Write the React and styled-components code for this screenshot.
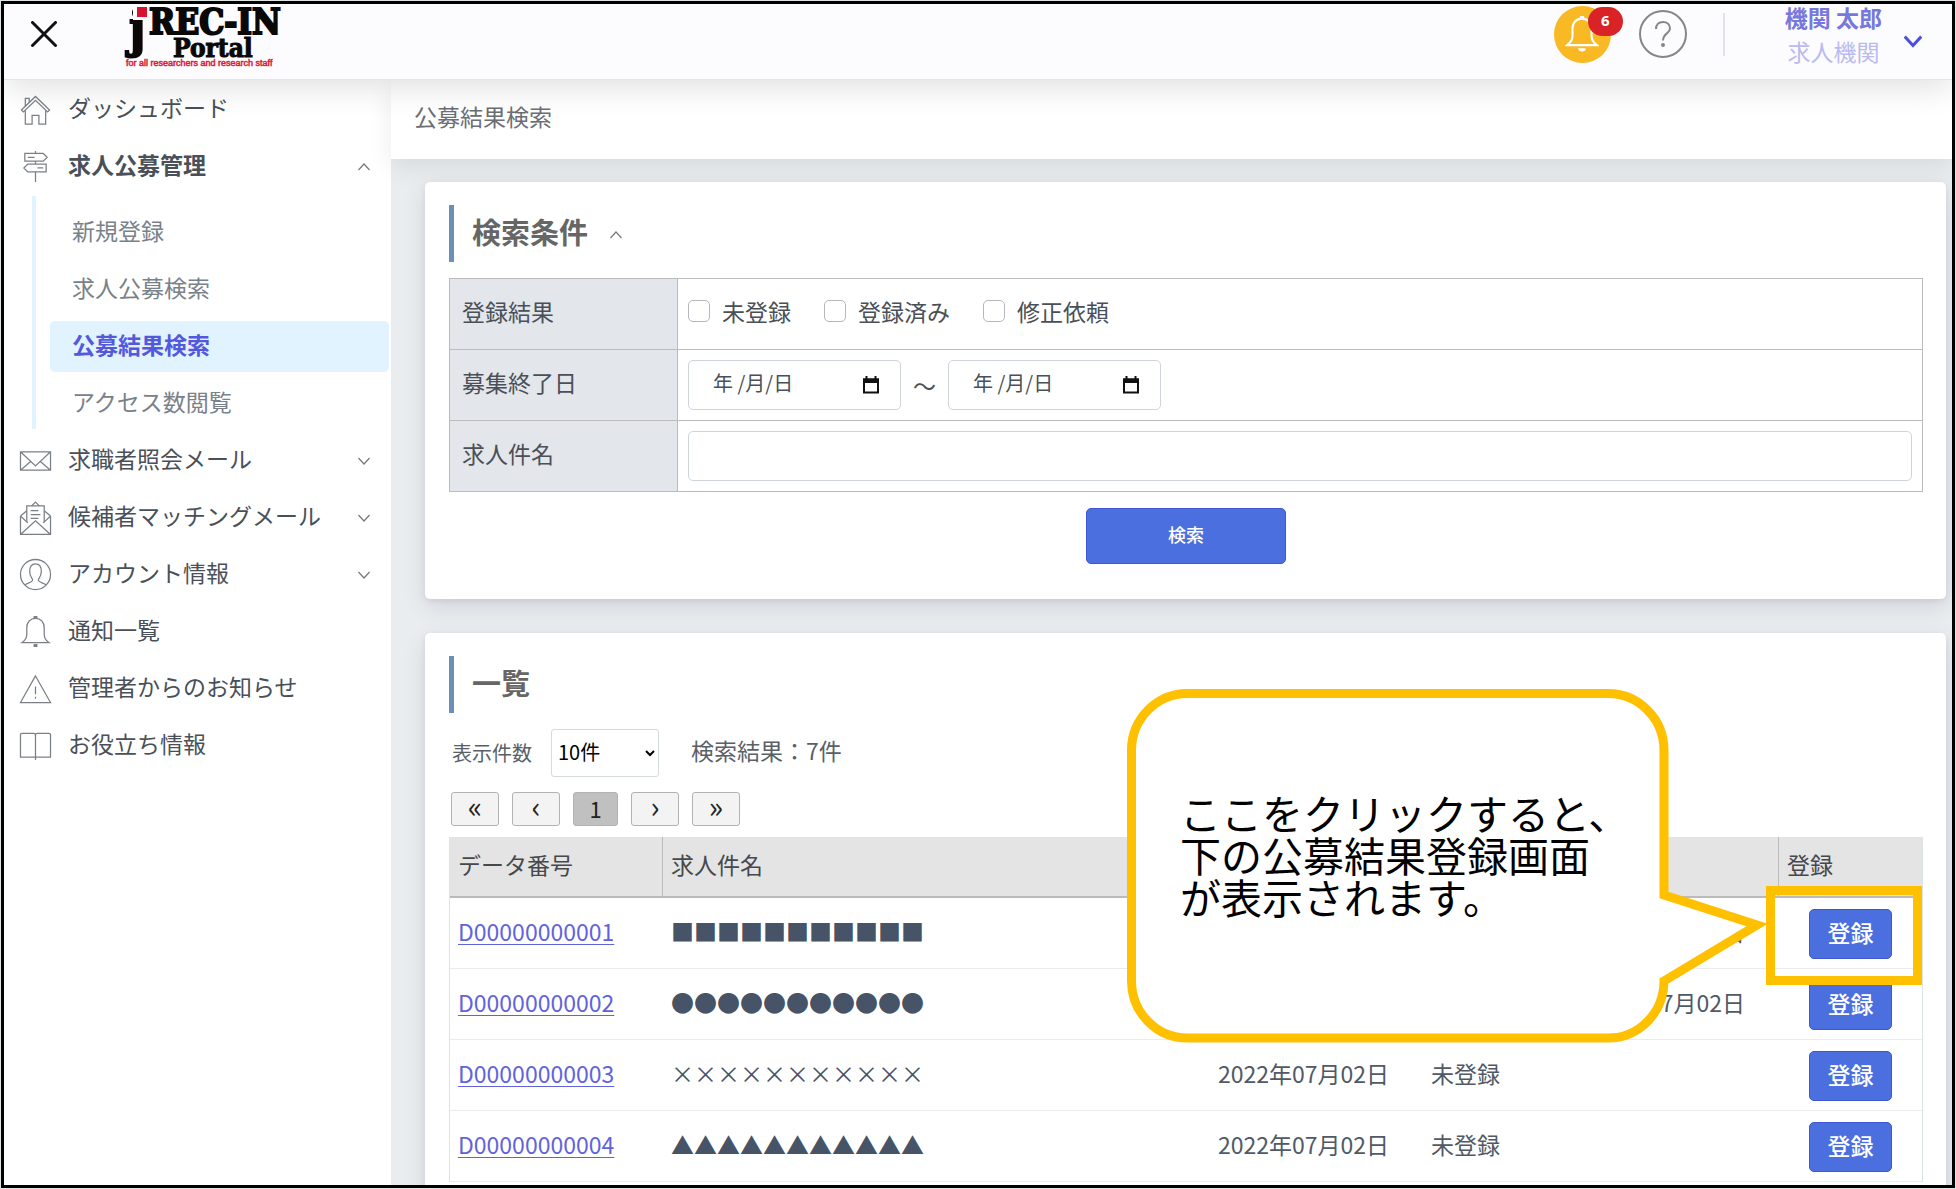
import React from "react";
import styled, { createGlobalStyle } from "styled-components";

const Global = createGlobalStyle`
  *, *::before, *::after { box-sizing: border-box; }
  body { margin: 0; background: #dfe5e2; }
  body, button, input, select {
    font-family: "Noto Sans CJK JP", "Noto Sans", sans-serif;
  }
  button { cursor: pointer; padding: 0; }
`;

const INK = "#4a5058";
const BLUE = "#4c6fdf";
const AMBER = "#ffc000";

/* ---------- page shell ---------- */

const Frame = styled.div`
  height: 100vh;
  padding: 1px;
  overflow: hidden;
`;

const Shell = styled.div`
  height: 100%;
  display: flex;
  flex-direction: column;
  border: 3px solid #000;
  background: #e9edf0;
  overflow: hidden;
`;

const Header = styled.header`
  position: relative;
  z-index: 2;
  flex: none;
  height: 76px;
  padding: 0 30px 15px 27px;
  display: flex;
  align-items: center;
  background: #fcfcff;
  border-bottom: 1px solid #e4e5e8;
  box-shadow: 0 8px 32px rgba(0, 0, 0, 0.12);
`;

const IconButton = styled.button`
  display: flex;
  border: 0;
  background: none;
  color: #111;
`;

const LogoLink = styled.a`
  display: flex;
  margin-left: 68px;
  margin-right: auto;
`;

const HeaderTools = styled.div`
  display: flex;
  align-items: center;
  gap: 28px;
`;

const BellButton = styled.button`
  position: relative;
  width: 57px;
  height: 57px;
  display: flex;
  align-items: center;
  justify-content: center;
  border: 0;
  border-radius: 50%;
  background: #f8b924;
`;

const Badge = styled.span`
  position: absolute;
  top: 1px;
  right: -12px;
  width: 35px;
  height: 29px;
  border-radius: 15px;
  background: #d92326;
  color: #fff;
  font: 700 15px/27px "Noto Sans", sans-serif;
  text-align: center;
`;

const HelpButton = styled.button`
  display: flex;
  border: 0;
  background: none;
`;

const UserBox = styled.div`
  display: flex;
  align-items: center;
  gap: 60px;
  margin-left: 8px;
`;

const Divider = styled.span`
  width: 2px;
  height: 43px;
  background: #e1e3e8;
`;

const User = styled.div`
  display: flex;
  align-items: center;
  gap: 22px;
  ${IconButton} { padding-top: 14px; }
`;

const UserText = styled.div`
  display: flex;
  flex-direction: column;
  align-items: center;
  font-size: 23px;
  line-height: 34px;
  color: #b9baf0;
  strong { color: #7678dd; font-weight: 700; }
`;

const Body = styled.div`
  flex: 1;
  min-height: 0;
  display: flex;
`;

/* ---------- side menu ---------- */

const Side = styled.nav`
  flex: none;
  width: 387px;
  background: #fff;
`;

const MenuRow = styled.a`
  display: flex;
  align-items: center;
  height: 57px;
  padding: 0 21px 0 16px;
  color: ${INK};
  font-size: 23px;
  font-weight: ${(p) => (p.$open ? 700 : 400)};
  text-decoration: none;
  span { flex: 1; padding: 0 0 3px 17px; }
  > svg { margin-top: 3px; }
`;

const MenuIcon = styled.svg`
  flex: none;
  width: 31px;
  height: 32px;
  fill: none;
  stroke: #7b8087;
  stroke-width: 1.3;
  overflow: visible;
`;

const SubMenu = styled.div`
  margin: 2px 2px 2px 28px;
  padding: 11px 0 0 14px;
  border-left: 4px solid #e0f3ff;
`;

const SubRow = styled.a`
  display: flex;
  align-items: center;
  height: 51px;
  margin-bottom: 6px;
  padding: 0 0 6px 22px;
  border-radius: 5px;
  font-size: 23px;
  text-decoration: none;
  color: ${(p) => (p.$active ? "#5458dc" : "#79828a")};
  font-weight: ${(p) => (p.$active ? 700 : 400)};
  background: ${(p) => (p.$active ? "#e0f3ff" : "transparent")};
  &:last-child { margin-bottom: 0; }
`;

/* ---------- main ---------- */

const Main = styled.main`
  flex: 1;
  min-width: 0;
  display: flex;
  flex-direction: column;
`;

const Crumb = styled.div`
  flex: none;
  height: 79px;
  padding: 0 24px 8px 23px;
  display: flex;
  align-items: center;
  background: #fff;
  color: #6b6e73;
  font-size: 23px;
  box-shadow: 0 8px 24px rgba(0, 0, 0, 0.08);
`;

const Cards = styled.div`
  flex: 1;
  display: flex;
  flex-direction: column;
  gap: 34px;
  padding: 23px 6px 0 34px;
`;

const Card = styled.section`
  flex: ${(p) => (p.$fill ? "1 0 auto" : "none")};
  padding: 23px 23px 35px 24px;
  border-radius: 5px;
  background: #fff;
  box-shadow: 0 8px 24px rgba(8, 10, 37, 0.1), 0 2px 6px rgba(8, 10, 37, 0.08);
`;

const Title = styled.h2`
  display: flex;
  align-items: center;
  gap: 22px;
  height: 57px;
  margin: 0 0 16px;
  padding: 0 0 6px 18px;
  border-left: 5px solid #6c8fb5;
  color: #666;
  font-size: 29px;
  font-weight: 700;
  svg { margin-top: 8px; }
`;

const FormTable = styled.table`
  width: 100%;
  border-collapse: collapse;
  table-layout: fixed;
  color: ${INK};
  font-size: 23px;
  th, td { height: 71px; border: 1px solid #bbb; }
  th {
    width: 228px;
    padding: 0 12px 7px;
    background: #e3e6eb;
    font-weight: 400;
    text-align: left;
  }
  td { padding: 0 10px; }
`;

const Line = styled.div`
  display: flex;
  align-items: center;
  gap: ${(p) => p.$gap}px;
`;

const Check = styled.label`
  display: flex;
  align-items: center;
  gap: 12px;
  padding-bottom: 6px;
  input {
    appearance: none;
    width: 22px;
    height: 22px;
    margin: 0;
    border: 1px solid #b4b7bb;
    border-radius: 5px;
    background: #fff;
  }
`;

const Field = styled.div`
  display: flex;
  align-items: center;
  flex: ${(p) => (p.$wide ? "1" : "none")};
  width: 213px;
  height: 50px;
  padding: 0 20px 0 24px;
  border: 1px solid #ced4da;
  border-radius: 5px;
  background: #fff;
  input {
    flex: 1;
    min-width: 0;
    padding: 0 0 6px;
    border: 0;
    outline: 0;
    background: none;
    color: ${INK};
    font-size: 20px;
  }
  input::placeholder { color: ${INK}; opacity: 1; }
`;

const Blue = styled.button`
  width: ${(p) => p.$w}px;
  height: ${(p) => p.$h}px;
  display: block;
  margin: ${(p) => p.$top || 0}px auto 0;
  padding-bottom: 4px;
  border: 1px solid #3f57d2;
  border-radius: 5px;
  background: ${BLUE};
  color: #fff;
  font-size: ${(p) => p.$size}px;
  font-weight: 500;
`;

const CountRow = styled.div`
  display: flex;
  align-items: center;
  height: 48px;
  padding-left: 3px;
  color: #5a6068;
  font-size: 23px;
  label { padding-bottom: 2px; font-size: 20px; }
  span { padding-bottom: 6px; }
  select {
    width: 108px;
    height: 48px;
    margin: 0 32px 0 19px;
    padding: 0 2px 4px;
    border: 1px solid #d5dadd;
    border-radius: 3px;
    background: #fff;
    color: #000;
    font-size: 20px;
  }
`;

const Pager = styled.div`
  display: flex;
  gap: 13px;
  margin: 15px 0 11px 2px;
`;

const PageButton = styled.button`
  width: ${(p) => (p.$on ? 45 : 48)}px;
  height: 34px;
  display: flex;
  align-items: center;
  justify-content: center;
  padding-bottom: ${(p) => (p.$on ? 3 : 8)}px;
  border: 1px solid #b2b2b2;
  border-radius: 3px;
  background: ${(p) => (p.$on ? "#c0c0c0" : "#f3f3f3")};
  color: #222;
  font-size: ${(p) => (p.$on ? 22 : 30)}px;
  line-height: 30px;
`;

const ListTable = styled.table`
  width: 100%;
  border-collapse: separate;
  border-spacing: 0;
  table-layout: fixed;
  border: solid #dde2e4;
  border-width: 0 1px;
  color: #505a66;
  font-size: 23px;
  th {
    height: 61px;
    padding: 0 8px 5px;
    border-bottom: 2px solid #bbb;
    background: #e4e4e4;
    color: #45484d;
    font-weight: 400;
    text-align: left;
  }
  th.ruled { border-right: 1px solid #bbb; }
  td {
    height: 71px;
    padding: 0 8px 4px;
    border-bottom: 1px solid #e9ecef;
    white-space: nowrap;
  }
  td:last-child { padding: 2px 8px 0; }
  a { color: #6163dd; text-underline-offset: 3px; text-decoration-thickness: 1px; }
`;

const Shapes = styled.span`
  color: #475366;
`;

const ActionCell = styled.td`
  position: relative;
`;

const Highlight = styled.div`
  position: absolute;
  inset: -12px 0 -17px -13px;
  z-index: 1;
  border: 9px solid ${AMBER};
  pointer-events: none;
`;

const Callout = styled.div`
  position: absolute;
  z-index: 1;
  top: -209px;
  right: calc(100% + 12px);
  width: 640px;
  height: 354px;
  svg { position: absolute; inset: 0; }
  p {
    position: relative;
    margin: 0;
    padding: 102px 0 0 53px;
    color: #000;
    font-size: 41px;
    line-height: 42px;
    white-space: nowrap;
  }
`;

/* ---------- drawings ---------- */

const Chevron = ({ w = 12, up, width = 1.2, color = "#777" }) => (
  <svg width={w} height={w} viewBox="0 0 12 12" fill="none" stroke={color} strokeWidth={width}>
    <path d={up ? "M0.5 9 6 3 11.5 9" : "M0.5 3 6 9 11.5 3"} />
  </svg>
);

const Logo = () => (
  <svg width="160" height="64" viewBox="0 0 160 64" overflow="visible" role="img" aria-label="jREC-IN Portal">
    <g
      fontFamily='"DejaVu Serif Condensed", "DejaVu Serif", serif'
      fontWeight="700"
      fill="#0b0808"
      stroke="#0b0808"
    >
      <text x="4" y="44" fontSize="50" strokeWidth="2">j</text>
      <text x="24" y="32" fontSize="35" strokeWidth="2">REC-IN</text>
      <text x="48" y="55" fontSize="26" strokeWidth="1">Portal</text>
    </g>
    <rect x="8" y="2" width="15" height="16" fill="#fcfcff" />
    <rect x="12" y="5" width="10" height="10" fill="#d7112f" />
    <text x="1" y="64" fontSize="9" fontFamily='"Liberation Sans", sans-serif' fill="#e0193a" stroke="#e0193a" strokeWidth="0.5">
      for all researchers and research staff
    </text>
  </svg>
);

const BellShape = "M16 2.5c-5.5 0-9 4-9 9.500v7c0 4-1.500 6-5 8.500h28c-3.500-2.500-5-4.500-5-8.500v-7c0-5.500-3.500-9.500-9-9.500z";

const icons = {
  home: (
    <>
      <path d="M1.500 16.500 16 2.500 30.500 16.500 28.500 18.500 16 6.500 3.500 18.500z" />
      <path d="M5.500 17v14h7v-9h7v9h7V17M5.500 12.500v-8h4v4" />
    </>
  ),
  signs: (
    <>
      <path d="M5 2.500h19l4 4-4 4H5zM27 13.500H8l-4 4 4 4h19zM8 6.500h7M18 17.500h6" />
      <path d="M16 0v2.500M16 10.500v3M16 21.500V32" />
    </>
  ),
  mail: <path d="M.5 7h31v19H.5zM.5 7 16 21.500 31.500 7M.5 26 11 17M31.500 26 21 17" />,
  openMail: (
    <>
      <path d="M.5 14.500v19h31v-19M.5 33.500 16 19.500l15.500 14M.5 14.500 7 9M.5 14.500l7.500 7M31.500 14.500 25 9M31.500 14.500l-7.500 7" />
      <path d="M7 21V4h18v17M12 4l4-4 4 4M11 9h8M11 13h10M11 17h8" />
    </>
  ),
  person: (
    <>
      <circle cx="16" cy="16" r="15.500" />
      <path d="M5 27c2-3 7-2 8-5 .6-2-3-3-3-9 0-5 2-8 6-8s6 3 6 8c0 6-3.600 7-3 9 1 3 6 2 8 5" />
    </>
  ),
  bell: (
    <>
      <path d={BellShape} />
      <path d="M14 1.500h4M14 30.500h4" strokeWidth="3" />
    </>
  ),
  warn: <path d="M16 3 .5 30.500h31zM16 14v8M16 24.500v2" />,
  book: <path d="M2 3.500h12q2 0 2 2 0-2 2-2h12q1.500 0 1.500 1.500v23H.5V5Q.5 3.500 2 3.500zM16 5v26" />,
};

const Icon = ({ name }) => (
  <MenuIcon viewBox="0 0 32 33" aria-hidden="true">{icons[name]}</MenuIcon>
);

const Calendar = () => (
  <svg width="18" height="20" viewBox="0 0 18 20" aria-hidden="true">
    <path d="M2 4.500h14v13H2z" fill="none" stroke="#111" strokeWidth="2" />
    <path d="M1 3.500h16V8H1zM3.500 1h2v3h-2zM12.500 1h2v3h-2z" fill="#111" />
  </svg>
);

/* ---------- data ---------- */

const lowerMenu = [
  { icon: "mail", text: "求職者照会メール", more: true },
  { icon: "openMail", text: "候補者マッチングメール", more: true },
  { icon: "person", text: "アカウント情報", more: true },
  { icon: "bell", text: "通知一覧" },
  { icon: "warn", text: "管理者からのお知らせ" },
  { icon: "book", text: "お役立ち情報" },
];

const subMenu = ["新規登録", "求人公募検索", "公募結果検索", "アクセス数閲覧"];

const rows = [
  { id: "D00000000001", mark: "■", done: "2022年07月02日" },
  { id: "D00000000002", mark: "●", done: "2022年07月02日" },
  { id: "D00000000003", mark: "×", end: "2022年07月02日", state: "未登録" },
  { id: "D00000000004", mark: "▲", end: "2022年07月02日", state: "未登録" },
];

const DateField = ({ label }) => (
  <Field>
    <input type="text" placeholder="年 /月/日" aria-label={label} />
    <Calendar />
  </Field>
);

export default function App() {
  return (
    <Frame>
      <Global />
      <Shell>
        <Header>
          <IconButton aria-label="メニューを閉じる">
            <svg width="26" height="26" viewBox="0 0 26 26" stroke="currentColor" strokeWidth="3" strokeLinecap="round">
              <path d="M1.500 1.500l23 23M24.500 1.500l-23 23" />
            </svg>
          </IconButton>
          <LogoLink href="#top"><Logo /></LogoLink>
          <HeaderTools>
            <BellButton aria-label="通知">
              <svg width="34" height="36" viewBox="0 0 32 34" fill="none" stroke="#fff" strokeWidth="2">
                <path d={BellShape} />
                <path d="M14 1.500h4" strokeWidth="3" />
                <path d="M12.500 30.500h7a3.500 3 0 0 1-7 0z" fill="#fff" stroke="none" />
              </svg>
              <Badge>6</Badge>
            </BellButton>
            <HelpButton aria-label="ヘルプ">
              <svg width="48" height="48" viewBox="0 0 48 48" fill="none" stroke="#868686" strokeWidth="2">
                <circle cx="24" cy="24" r="23" />
                <path d="M17 19c0-4.500 3-7 7-7s7 2.500 7 6.500c0 5-7 5-7 12" />
                <circle cx="24" cy="35" r="2" fill="#868686" stroke="none" />
              </svg>
            </HelpButton>
            <UserBox>
              <Divider />
              <User>
                <UserText><strong>機関 太郎</strong><span>求人機関</span></UserText>
                <IconButton aria-label="ユーザーメニュー">
                  <Chevron w={18} width={2} color="#4b4fdc" />
                </IconButton>
              </User>
            </UserBox>
          </HeaderTools>
        </Header>
        <Body>
          <Side>
            <MenuRow href="#dashboard"><Icon name="home" /><span>ダッシュボード</span></MenuRow>
            <MenuRow href="#jobs" $open><Icon name="signs" /><span>求人公募管理</span><Chevron up /></MenuRow>
            <SubMenu>
              {subMenu.map((t) => (
                <SubRow key={t} href="#sub" $active={t === "公募結果検索"}>{t}</SubRow>
              ))}
            </SubMenu>
            {lowerMenu.map((m) => (
              <MenuRow key={m.text} href="#menu">
                <Icon name={m.icon} /><span>{m.text}</span>{m.more && <Chevron />}
              </MenuRow>
            ))}
          </Side>
          <Main>
            <Crumb>公募結果検索</Crumb>
            <Cards>
              <Card>
                <Title>検索条件<Chevron up /></Title>
                <FormTable>
                  <tbody>
                    <tr>
                      <th scope="row">登録結果</th>
                      <td>
                        <Line $gap={33}>
                          {["未登録", "登録済み", "修正依頼"].map((t) => (
                            <Check key={t}><input type="checkbox" />{t}</Check>
                          ))}
                        </Line>
                      </td>
                    </tr>
                    <tr>
                      <th scope="row">募集終了日</th>
                      <td>
                        <Line $gap={12}>
                          <DateField label="募集終了日 開始" />
                          <span>～</span>
                          <DateField label="募集終了日 終了" />
                        </Line>
                      </td>
                    </tr>
                    <tr>
                      <th scope="row"><label htmlFor="job-name">求人件名</label></th>
                      <td><Line><Field $wide><input id="job-name" type="text" /></Field></Line></td>
                    </tr>
                  </tbody>
                </FormTable>
                <Blue $w={200} $h={56} $top={16} $size={18}>検索</Blue>
              </Card>
              <Card $fill>
                <Title>一覧</Title>
                <CountRow>
                  <label htmlFor="per-page">表示件数</label>
                  <select id="per-page"><option>10件</option></select>
                  <span>検索結果：7件</span>
                </CountRow>
                <Pager>
                  {["«", "‹", "1", "›", "»"].map((t) => (
                    <PageButton key={t} $on={t === "1"}>{t}</PageButton>
                  ))}
                </Pager>
                <ListTable>
                  <colgroup>
                    <col style={{ width: 213 }} />
                    <col />
                    <col style={{ width: 213 }} />
                    <col style={{ width: 143 }} />
                    <col style={{ width: 213 }} />
                    <col style={{ width: 143 }} />
                  </colgroup>
                  <thead>
                    <tr>
                      <th className="ruled">データ番号</th>
                      <th>求人件名</th>
                      <th />
                      <th />
                      <th className="ruled" />
                      <th>登録</th>
                    </tr>
                  </thead>
                  <tbody>
                    {rows.map((r, i) => (
                      <tr key={r.id}>
                        <td><a href={"#" + r.id}>{r.id}</a></td>
                        <td><Shapes>{r.mark.repeat(11)}</Shapes></td>
                        <td>{r.end}</td>
                        <td>{r.state}</td>
                        <td>{r.done}</td>
                        <ActionCell>
                          <Blue $w={83} $h={50} $size={23}>登録</Blue>
                          {i === 0 && (
                            <>
                              <Highlight />
                              <Callout>
                                <svg width="640" height="354" viewBox="0 0 640 354" aria-hidden="true">
                                  <path
                                    d="M61 4.500H481A56 57 0 0 1 537 62V206L630 236 537 292A56 57 0 0 1 481 349H61A56 57 0 0 1 4.500 292V62A56 57 0 0 1 61 4.500z"
                                    fill="#fff"
                                    stroke={AMBER}
                                    strokeWidth="9"
                                  />
                                </svg>
                                <p>ここをクリックすると、<br />下の公募結果登録画面<br />が表示されます。</p>
                              </Callout>
                            </>
                          )}
                        </ActionCell>
                      </tr>
                    ))}
                  </tbody>
                </ListTable>
              </Card>
            </Cards>
          </Main>
        </Body>
      </Shell>
    </Frame>
  );
}
